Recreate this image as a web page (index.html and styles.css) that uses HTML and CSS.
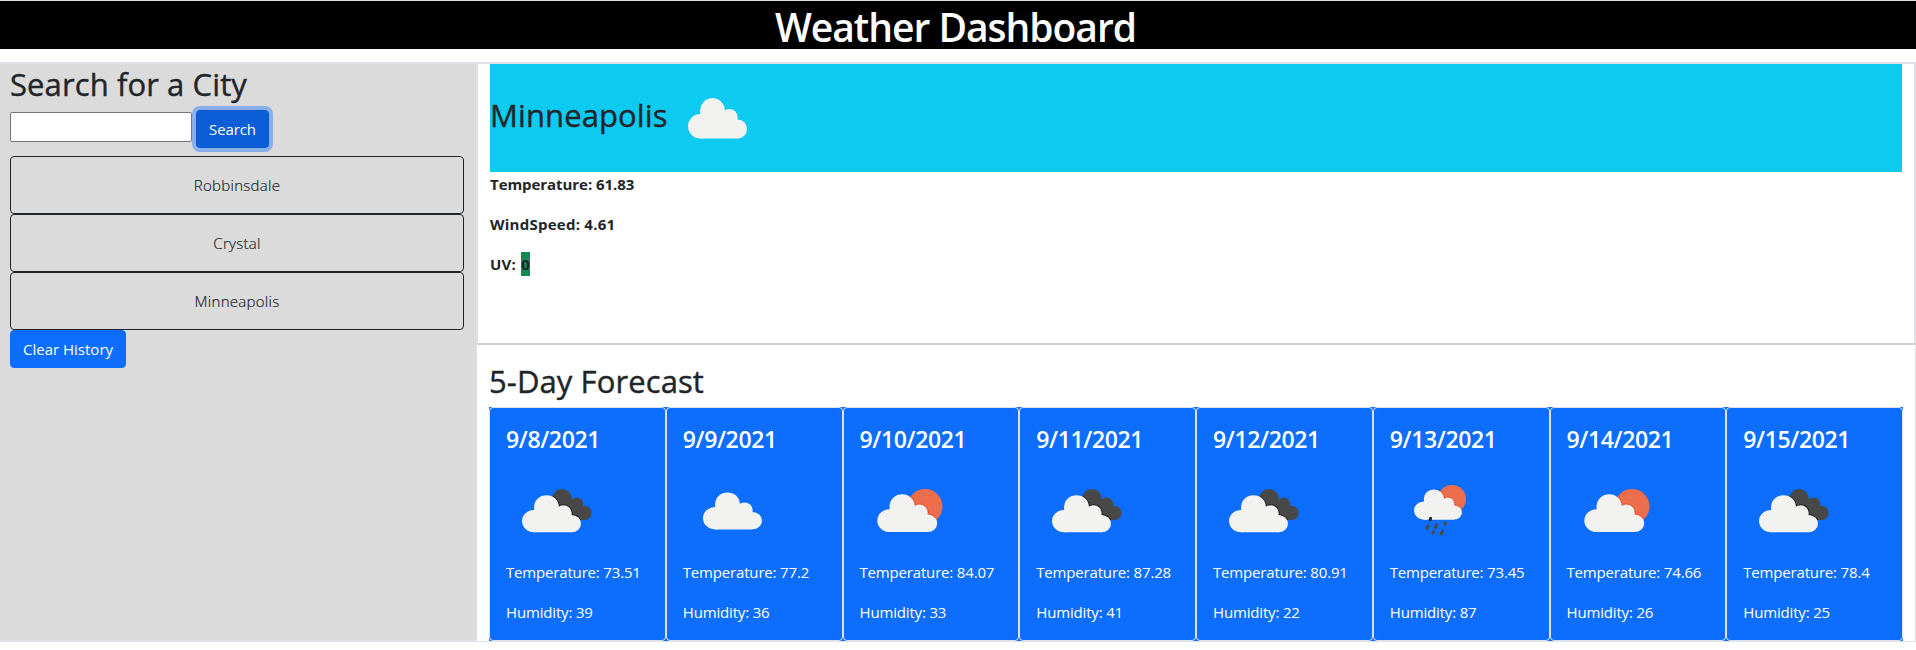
FILE: index.html
```html
<!DOCTYPE html>
<html lang="en">
<head>
<meta charset="utf-8">
<title>Weather Dashboard</title>
<link rel="stylesheet" href="styles.css">
</head>
<body>
<svg class="sprite" aria-hidden="true">
  <defs>
    <g id="cloud">
      <circle cx="12.2" cy="28.3" r="12.2"/>
      <circle cx="24.5" cy="12.4" r="12.3"/>
      <circle cx="41.5" cy="19" r="8"/>
      <circle cx="49.6" cy="31" r="9.4"/>
      <path d="M12.2 12.4H36.8V19H49.5V40.5H12.2Z"/>
    </g>
    <clipPath id="behind-broken"><circle cx="56" cy="34" r="10"/><circle cx="70.7" cy="39" r="6.5"/><circle cx="78.5" cy="48" r="7.2"/><path d="M56 34H66L77 39V46L79 55H60Z"/></clipPath>
    <clipPath id="behind-sun"><circle cx="65" cy="41.5" r="17.5"/></clipPath>
    <clipPath id="behind-rain"><circle cx="62" cy="34" r="14"/></clipPath>
    <symbol id="icon-cloud" viewBox="0 0 100 92" preserveAspectRatio="none">
      <use href="#cloud" transform="translate(20 27.3) scale(1 .916)" fill="#f2f2f1"/>
    </symbol>
    <symbol id="icon-broken" viewBox="0 0 100 92" preserveAspectRatio="none">
      <g clip-path="url(#behind-broken)">
        <rect width="100" height="92" fill="#484849"/>
        <use href="#cloud" transform="translate(16 30.2) scale(1 .916)" fill="#222224" stroke="#222224" stroke-width="2"/>
      </g>
      <use href="#cloud" transform="translate(16 30.2) scale(1 .916)" fill="#f2f2f1"/>
    </symbol>
    <symbol id="icon-sun-cloud" viewBox="0 0 100 92" preserveAspectRatio="none">
      <g clip-path="url(#behind-sun)">
        <rect width="100" height="92" fill="#ec6e4c"/>
        <use href="#cloud" transform="translate(17.3 29.2) scale(1.015 .936)" fill="#e9502c" stroke="#e9502c" stroke-width="2"/>
      </g>
      <use href="#cloud" transform="translate(17.3 29.2) scale(1.015 .936)" fill="#f2f2f1"/>
    </symbol>
    <symbol id="icon-rain" viewBox="0 0 100 92" preserveAspectRatio="none">
      <g clip-path="url(#behind-rain)">
        <rect width="100" height="92" fill="#ec6e4c"/>
        <use href="#cloud" transform="translate(24 24.3) scale(.813 .75)" fill="#e9502c" stroke="#e9502c" stroke-width="2"/>
      </g>
      <use href="#cloud" transform="translate(24 24.3) scale(.813 .75)" fill="#f2f2f1"/>
      <g stroke-width="3" stroke-linecap="round">
        <path d="M40.6 53.4l-.5 1.2" stroke="#222224"/>
        <path d="M38 60.8l-1.2 2.8M46.6 59.6l-1.4 3M55.4 57.8l-.5 1.2M43.6 66.8l-.5 1.2M52.4 66l-1.2 2.8" stroke="#484849"/>
      </g>
    </symbol>
  </defs>
</svg>
<header class="banner"><h1>Weather Dashboard</h1></header>
<div class="layout">
  <aside class="sidebar">
    <h2>Search for a City</h2>
    <form class="search">
      <input type="text" aria-label="City">
      <button type="button" class="btn btn-search">Search</button>
    </form>
    <div class="history">
      <button type="button" class="city">Robbinsdale</button>
      <button type="button" class="city">Crystal</button>
      <button type="button" class="city">Minneapolis</button>
    </div>
    <button type="button" class="btn">Clear History</button>
  </aside>
  <main class="main">
    <section class="current">
      <div class="current-head">
        <h2>Minneapolis</h2>
        <svg class="current-icon" viewBox="0 0 59 40.5"><use href="#cloud" fill="#f2f2f1"/></svg>
      </div>
      <p>Temperature: 61.83</p>
      <p class="wind">WindSpeed: 4.61</p>
      <p class="wind">UV: <span class="uv">0</span></p>
    </section>
    <section class="forecast">
      <h2>5-Day Forecast</h2>
      <div class="days">
        <article class="day"><h4>9/8/2021</h4><svg class="icon"><use href="#icon-broken"/></svg><p>Temperature: 73.51</p><p>Humidity: 39</p></article>
        <article class="day"><h4>9/9/2021</h4><svg class="icon"><use href="#icon-cloud"/></svg><p>Temperature: 77.2</p><p>Humidity: 36</p></article>
        <article class="day"><h4>9/10/2021</h4><svg class="icon"><use href="#icon-sun-cloud"/></svg><p>Temperature: 84.07</p><p>Humidity: 33</p></article>
        <article class="day"><h4>9/11/2021</h4><svg class="icon"><use href="#icon-broken"/></svg><p>Temperature: 87.28</p><p>Humidity: 41</p></article>
        <article class="day"><h4>9/12/2021</h4><svg class="icon"><use href="#icon-broken"/></svg><p>Temperature: 80.91</p><p>Humidity: 22</p></article>
        <article class="day"><h4>9/13/2021</h4><svg class="icon"><use href="#icon-rain"/></svg><p>Temperature: 73.45</p><p>Humidity: 87</p></article>
        <article class="day"><h4>9/14/2021</h4><svg class="icon"><use href="#icon-sun-cloud"/></svg><p>Temperature: 74.66</p><p>Humidity: 26</p></article>
        <article class="day"><h4>9/15/2021</h4><svg class="icon"><use href="#icon-broken"/></svg><p>Temperature: 78.4</p><p>Humidity: 25</p></article>
      </div>
    </section>
  </main>
</div>
</body>
</html>
```
FILE: styles.css
```css
* { box-sizing: border-box; }
body { margin: 0; background: #fff; color: #212529; font-family: "Open Sans", "Noto Sans", sans-serif; font-size: 15px; line-height: 24px; }
h1, h2, h4, p { margin: 0; }
h2 { font-size: 31px; font-weight: 500; line-height: 38.4px; letter-spacing: .1px; padding-top: 1px; -webkit-text-stroke: .4px #212529; }
button, input { font: inherit; }

.sprite { position: absolute; width: 0; height: 0; }

.banner { height: 49px; border-top: 1px solid #dee2e6; background: #000; color: #fff; text-align: center; }
.banner h1 { padding-top: 2px; font-size: 39px; font-weight: 600; line-height: 48px; letter-spacing: -1.02px; margin-left: -5px; }

.layout { display: grid; grid-template-columns: 477px 1fr; height: 580px; margin-top: 13px; }

.sidebar { padding: 0 12px 0 10px; border: solid #dee2e6; border-width: 2px 1px 2px 0; background: #dbdbdb; }
.search { display: flex; gap: 4px; margin: 6.6px 0 8px; }
.search input { width: 182px; height: 30px; margin-top: 2px; border: 1px solid #767676; border-radius: 2px; background: #fff; }
.btn { height: 38px; padding: 0 12px; border: 1px solid #0d6efd; border-radius: 4px; background: #0d6efd; color: #fff; line-height: 36px; }
.btn-search { width: 73px; border-color: #0a58ca; background: #0b5ed7; box-shadow: 0 0 0 4px rgba(49, 132, 253, .5); letter-spacing: -.1px; }
.history { display: flex; flex-direction: column; }
.city { height: 58px; border: 1px solid #212529; border-radius: 4px; background: none; color: #212529; font-weight: 300; letter-spacing: .28px; -webkit-text-stroke: .2px #212529; }

.main { display: flex; flex-direction: column; }
.current { height: 283px; padding: 0 12px; border: solid #dee2e6; border-width: 2px 2px 2px 1px; border-bottom-color: #cfd0d2; }
.current-head { display: flex; align-items: center; height: 108px; background: #0dcaf0; }
.current-head h2 { width: 198px; padding: 0 0 5px; }
.current-icon { width: 59px; height: 40.5px; margin-top: 1px; }
.current p { margin-bottom: 16px; font-weight: 700; letter-spacing: -.06px; }
.current .wind { letter-spacing: .25px; }
.uv { display: inline-block; width: 9px; margin-left: 1px; background: #198754; }

.forecast { flex: 1; padding: 15.6px 12px 0; border: solid #dee2e6; border-width: 0 1px 1px 0; }
.days { display: grid; grid-template-columns: repeat(8, 1fr); margin-top: 7px; background: #0d6efd; }
.day { height: 234px; padding: 16px; border: 1px solid #dee2e6; border-radius: 4px; color: #fff; }
.day h4 { padding-top: 1px; font-size: 23px; font-weight: 600; line-height: 29px; letter-spacing: -.35px; }
.icon { display: block; width: 100px; height: 92px; margin: 11px 0 3px; }
.day p { margin-bottom: 16px; letter-spacing: -.17px; }
```
